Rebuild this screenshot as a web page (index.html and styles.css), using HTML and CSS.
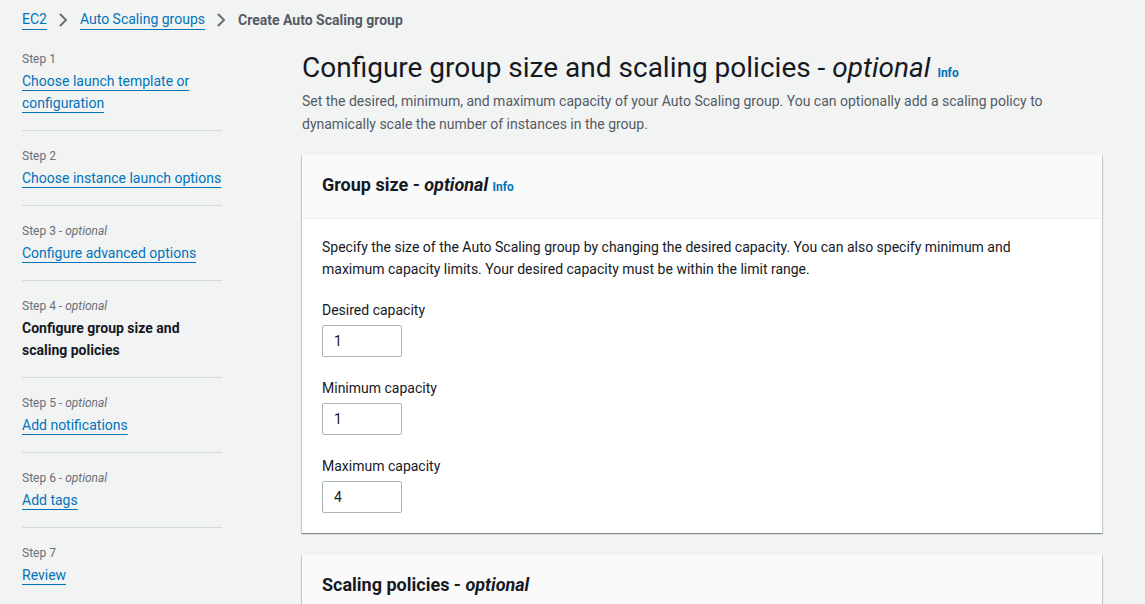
FILE: index.html
```html
<!DOCTYPE html>
<html lang="en">
<head>
<meta charset="utf-8">
<title>Create Auto Scaling group</title>
<link rel="stylesheet" href="styles.css">
</head>
<body>
<nav class="breadcrumbs">
  <a class="crumb-link" href="#">EC2</a>
  <svg class="chev" viewBox="0 0 16 16" width="16" height="16"><path d="M5 2l6 6-6 6" fill="none" stroke="#687078" stroke-width="2"/></svg>
  <a class="crumb-link" href="#">Auto Scaling groups</a>
  <svg class="chev" viewBox="0 0 16 16" width="16" height="16"><path d="M5 2l6 6-6 6" fill="none" stroke="#687078" stroke-width="2"/></svg>
  <span class="crumb-current">Create Auto Scaling group</span>
</nav>
<div class="layout">
  <aside class="steps">
    <div class="step">
      <div class="step-label">Step 1</div>
      <a class="step-link" href="#">Choose launch template or configuration</a>
    </div>
    <div class="step">
      <div class="step-label">Step 2</div>
      <a class="step-link" href="#">Choose instance launch options</a>
    </div>
    <div class="step">
      <div class="step-label">Step 3 - <i>optional</i></div>
      <a class="step-link" href="#">Configure advanced options</a>
    </div>
    <div class="step">
      <div class="step-label">Step 4 - <i>optional</i></div>
      <span class="step-current">Configure group size and scaling policies</span>
    </div>
    <div class="step">
      <div class="step-label">Step 5 - <i>optional</i></div>
      <a class="step-link" href="#">Add notifications</a>
    </div>
    <div class="step">
      <div class="step-label">Step 6 - <i>optional</i></div>
      <a class="step-link" href="#">Add tags</a>
    </div>
    <div class="step">
      <div class="step-label">Step 7</div>
      <a class="step-link" href="#">Review</a>
    </div>
  </aside>
  <main class="main">
    <h1 class="page-title">Configure group size and scaling policies - <i>optional</i> <a class="info" href="#">Info</a></h1>
    <p class="page-desc">Set the desired, minimum, and maximum capacity of your Auto Scaling group. You can optionally add a scaling policy to dynamically scale the number of instances in the group.</p>
    <section class="card">
      <header class="card-head">
        <h2 class="card-title">Group size - <i>optional</i> <a class="info" href="#">Info</a></h2>
      </header>
      <div class="card-body">
        <p class="card-desc">Specify the size of the Auto Scaling group by changing the desired capacity. You can also specify minimum and maximum capacity limits. Your desired capacity must be within the limit range.</p>
        <div class="field">
          <label class="field-label">Desired capacity</label>
          <div class="input">1</div>
        </div>
        <div class="field">
          <label class="field-label">Minimum capacity</label>
          <div class="input">1</div>
        </div>
        <div class="field">
          <label class="field-label">Maximum capacity</label>
          <div class="input">4</div>
        </div>
      </div>
    </section>
    <section class="card">
      <header class="card-head card-head-last">
        <h2 class="card-title">Scaling policies - <i>optional</i></h2>
      </header>
    </section>
  </main>
</div>
</body>
</html>
```
FILE: styles.css
```css
* { box-sizing: border-box; }
html, body { margin: 0; padding: 0; }
body {
  background: #f2f3f3;
  font-family: Roboto, "Liberation Sans", sans-serif;
  font-size: 14px;
  color: #16191f;
  height: 604px;
  overflow: hidden;
}
a { color: #0073bb; text-decoration: none; }

.breadcrumbs {
  display: flex;
  align-items: center;
  padding: 9px 0 0 22px;
  height: 30px;
  line-height: 22px;
}
.crumb-link {
  border-bottom: 1px solid #0073bb;
  line-height: 19px;
}
.chev { margin: 0 9px 0 8px; }
.crumb-current { color: #545b64; font-weight: 700; }

.layout {
  display: flex;
  padding-top: 21px;
}
.steps {
  width: 200px;
  margin-left: 22px;
  flex: none;
}
.step {
  border-bottom: 1px solid #d5dbdb;
  padding: 0 0 16px;
  margin-bottom: 17px;
}
.step:last-child { border-bottom: none; }
.step-label {
  font-size: 12px;
  line-height: 16px;
  color: #687078;
  margin-bottom: 3px;
}
.step-link {
  line-height: 22px;
  text-decoration: underline;
  text-underline-offset: 4px;
  text-decoration-thickness: 1px;
}
.step-current {
  display: block;
  font-weight: 700;
  line-height: 22px;
  color: #16191f;
}

.main {
  margin-left: 80px;
  width: 800px;
  flex: none;
}
.page-title {
  margin: -1px 0 0;
  font-size: 28px;
  font-weight: 400;
  line-height: 36px;
  color: #16191f;
}
.info {
  font-size: 12px;
  font-weight: 700;
}
.page-desc {
  margin: -1px 0 19px;
  line-height: 23px;
  color: #545b64;
}
.card {
  background: #fff;
  box-shadow: 0 1px 1px 0 rgba(0,28,36,0.3), 1px 1px 1px 0 rgba(0,28,36,0.15), -1px 1px 1px 0 rgba(0,28,36,0.15);
  margin-bottom: 22px;
}
.card-head {
  background: #fafafa;
  border-bottom: 1px solid #eaeded;
  padding: 18px 20px 19px;
}
.card-head-last { border-bottom: none; }
.card-title {
  margin: 0;
  font-size: 18px;
  font-weight: 700;
  line-height: 24px;
}
.card-body {
  padding: 17px 20px 20px;
}
.card-desc {
  margin: 0 0 19px;
  max-width: 720px;
  line-height: 22px;
}
.field { margin-bottom: 20px; }
.field:last-child { margin-bottom: 0; }
.field-label {
  display: block;
  line-height: 22px;
  margin-bottom: 4px;
}
.input {
  width: 80px;
  height: 32px;
  border: 1px solid #aab7b8;
  border-radius: 2px;
  padding: 0 11px;
  line-height: 30px;
  background: #fff;
}
```
